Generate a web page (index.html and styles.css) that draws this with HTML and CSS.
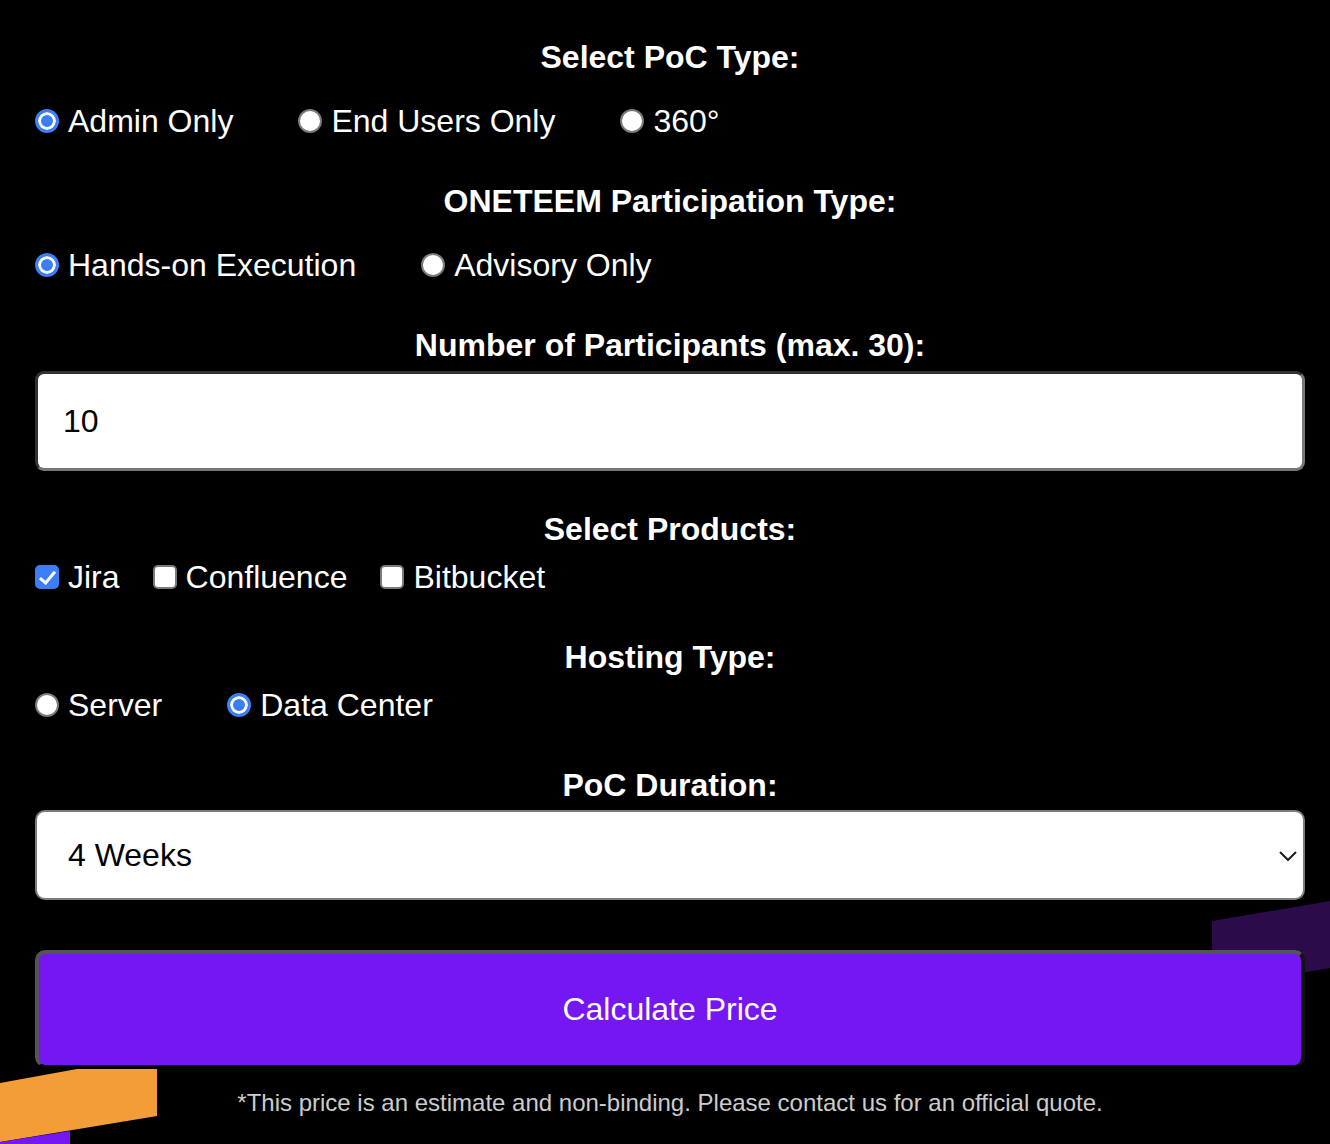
FILE: index.html
```html
<!DOCTYPE html>
<html lang="en">
<head>
    <meta charset="UTF-8">
    <meta name="viewport" content="width=device-width, initial-scale=1.0">
    <title>PoC Price Calculator</title>
    <link rel="stylesheet" href="styles.css">
</head>
<body>
    <svg class="shapes" viewBox="0 0 1330 1144" aria-hidden="true">
        <polygon points="1212,921 1330,901 1330,968 1212,988" fill="#2c0b4a"/>
        <polygon points="0,1083 77,1069 157,1069 157,1116 0,1142" fill="#f29d38"/>
        <polygon points="0,1142 70,1131 70,1144 0,1144" fill="#7517f2"/>
    </svg>

    <form class="calc" id="pocForm">
        <label class="field-title">Select PoC Type:</label>
        <div class="options options-wide">
            <label class="option"><input type="radio" name="pocType" value="admin" checked>Admin Only</label>
            <label class="option"><input type="radio" name="pocType" value="users">End Users Only</label>
            <label class="option"><input type="radio" name="pocType" value="full">360°</label>
        </div>

        <label class="field-title">ONETEEM Participation Type:</label>
        <div class="options options-wide">
            <label class="option"><input type="radio" name="participation" value="hands-on" checked>Hands-on Execution</label>
            <label class="option"><input type="radio" name="participation" value="advisory">Advisory Only</label>
        </div>

        <label class="field-title" for="participants">Number of Participants (max. 30):</label>
        <input type="number" id="participants" class="number-input" value="10" min="1" max="30">

        <label class="field-title">Select Products:</label>
        <div class="options options-tight">
            <label class="option"><input type="checkbox" name="products" value="jira" checked>Jira</label>
            <label class="option"><input type="checkbox" name="products" value="confluence">Confluence</label>
            <label class="option"><input type="checkbox" name="products" value="bitbucket">Bitbucket</label>
        </div>

        <label class="field-title">Hosting Type:</label>
        <div class="options">
            <label class="option"><input type="radio" name="hosting" value="server">Server</label>
            <label class="option"><input type="radio" name="hosting" value="dc" checked>Data Center</label>
        </div>

        <label class="field-title" for="duration">PoC Duration:</label>
        <div class="select-wrap">
            <select id="duration">
                <option value="2">2 Weeks</option>
                <option value="4" selected>4 Weeks</option>
                <option value="6">6 Weeks</option>
                <option value="8">8 Weeks</option>
            </select>
            <svg class="chevron" viewBox="0 0 18 10" aria-hidden="true">
                <path d="M1 1 L9 9 L17 1" fill="none" stroke="#1a1a1a" stroke-width="2"/>
            </svg>
        </div>

        <button type="submit" class="calc-btn">Calculate Price</button>
        <p class="disclaimer">*This price is an estimate and non-binding. Please contact us for an official quote.</p>
    </form>

    <script>
        document.getElementById('participants').addEventListener('input', function() {
            if (Number(this.value) > 30) {
                this.value = 30;
            }
        });

        document.getElementById('pocForm').addEventListener('submit', function(event) {
            event.preventDefault();
        });
    </script>
</body>
</html>
```

FILE: styles.css
```css
* {
    box-sizing: border-box;
}
body {
    margin: 0;
    background-color: #000;
    color: #fff;
    font-family: "Liberation Sans", Arial, sans-serif;
    font-size: 32px;
    position: relative;
    min-height: 100vh;
    overflow: hidden;
}
.shapes {
    position: absolute;
    left: 0;
    top: 0;
    width: 1330px;
    height: 1144px;
    z-index: 0;
}
.calc {
    position: relative;
    z-index: 1;
    display: flex;
    flex-direction: column;
    padding: 39px 15px 0 25px;
}
.field-title {
    display: block;
    text-align: center;
    font-weight: bold;
    line-height: 36px;
    margin-top: 44px;
}
.field-title:first-child {
    margin-top: 0;
}
.options {
    display: flex;
    align-items: center;
    gap: 65px;
    padding-left: 10px;
    margin-top: 12px;
    line-height: 36px;
}
.options-wide {
    margin-top: 28px;
}
.options-tight {
    gap: 33px;
}
.option {
    display: inline-flex;
    align-items: center;
    gap: 9px;
    cursor: pointer;
}
input[type="radio"], input[type="checkbox"] {
    appearance: none;
    -webkit-appearance: none;
    margin: 0;
    width: 24px;
    height: 24px;
    flex-shrink: 0;
    background: #fff;
    border: 2px solid #7a7a7a;
    position: relative;
}
input[type="radio"] {
    border-radius: 50%;
}
input[type="radio"]:checked {
    border: 3px solid #3b7ef5;
    background: #3b7ef5;
    box-shadow: inset 0 0 0 3px #fff;
}
input[type="checkbox"] {
    border-radius: 5px;
}
input[type="checkbox"]:checked {
    background: #3b7ef5;
    border-color: #3b7ef5;
}
input[type="checkbox"]:checked::after {
    content: "";
    position: absolute;
    left: 6px;
    top: 1px;
    width: 6px;
    height: 13px;
    border-right: 3px solid #fff;
    border-bottom: 3px solid #fff;
    transform: rotate(40deg);
}
.number-input {
    margin: 8px 10px 0;
    height: 100px;
    padding: 0 25px;
    font-family: inherit;
    font-size: 32px;
    color: #000;
    background: #fff;
    border: 3px solid;
    border-color: #333 #777 #777 #333;
    border-radius: 9px;
    outline: none;
    -moz-appearance: textfield;
}
.number-input::-webkit-inner-spin-button,
.number-input::-webkit-outer-spin-button {
    -webkit-appearance: none;
    margin: 0;
}
.number-input + .field-title {
    margin-top: 40px;
}
.select-wrap {
    position: relative;
    margin: 7px 10px 0;
}
.select-wrap select {
    appearance: none;
    -webkit-appearance: none;
    width: 100%;
    height: 90px;
    padding: 0 31px;
    font-family: inherit;
    font-size: 32px;
    color: #000;
    background: #fff;
    border: 2px solid #7d7d7d;
    border-radius: 10px;
    outline: none;
}
.chevron {
    position: absolute;
    right: 8px;
    top: 41px;
    width: 18px;
    height: 10px;
    pointer-events: none;
}
.calc-btn {
    margin: 50px 10px 0;
    height: 117px;
    font-family: inherit;
    font-size: 32px;
    color: #fff;
    background-color: #7517f2;
    border-style: solid;
    border-width: 4px 4px 2px 4px;
    border-color: #555 #111 #000 #555;
    border-radius: 10px;
    cursor: pointer;
}
.calc-btn:hover {
    background-color: #6510d8;
}
.disclaimer {
    margin: 22px 0 0;
    text-align: center;
    font-size: 24px;
    line-height: 28px;
    color: #ccc;
}
```
